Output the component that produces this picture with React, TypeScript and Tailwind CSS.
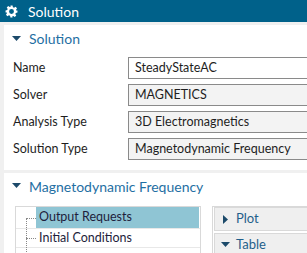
const font = "font-['Lato','Noto_Sans',sans-serif]";

const Gear = () => (
  <svg width="13" height="13" viewBox="0 0 24 24" className="shrink-0">
    <path
      fill="#ffffff"
      fillRule="evenodd"
      d="M10 1h4l.6 3.1a8.5 8.5 0 0 1 2.2.9l2.6-1.8 2.8 2.8-1.8 2.6a8.5 8.5 0 0 1 .9 2.2L23 10v4l-3.1.6a8.5 8.5 0 0 1-.9 2.2l1.8 2.6-2.8 2.8-2.6-1.8a8.5 8.5 0 0 1-2.2.9L14 23h-4l-.6-3.1a8.5 8.5 0 0 1-2.2-.9l-2.6 1.8-2.8-2.8 1.8-2.6a8.5 8.5 0 0 1-.9-2.2L1 14v-4l3.1-.6a8.5 8.5 0 0 1 .9-2.2L3.2 4.6 6 1.8l2.6 1.8a8.5 8.5 0 0 1 2.2-.9zM12 7.5a4.5 4.5 0 1 0 0 9 4.5 4.5 0 0 0 0-9z"
    />
  </svg>
);

const Down = () => (
  <svg width="9" height="6" viewBox="0 0 9 6" className="shrink-0">
    <path d="M0 0h9L4.5 5z" fill="#1c4a6a" />
  </svg>
);

const Right = () => (
  <svg width="5" height="9" viewBox="0 0 5 9" className="shrink-0">
    <path d="M0 0v9l5-4.5z" fill="#1c4a6a" />
  </svg>
);

const fields = [
  { label: "Name", value: "SteadyStateAC", editable: true },
  { label: "Solver", value: "MAGNETICS" },
  { label: "Analysis Type", value: "3D Electromagnetics" },
  { label: "Solution Type", value: "Magnetodynamic Frequency" },
];

export default function App() {
  return (
    <div className={`${font} h-[253px] w-[307px] overflow-hidden whitespace-nowrap bg-[#f0f0f0]`}>
      <div className="flex h-[22px] items-center gap-[10px] bg-[#00618a] pl-[5px] text-[14px] text-white">
        <Gear />
        <span>Solution</span>
      </div>

      <div className="flex flex-col gap-[3px] pl-[4px] pt-[3px]">
        <div className="bg-white pb-[10px]">
          <div className="mb-[5px] flex h-[27px] items-center gap-[8px] pl-[8px] text-[14px] text-[#1f6fa3]">
            <Down />
            <span>Solution</span>
          </div>
          <div className="flex flex-col gap-[5px]">
            {fields.map((f) => (
              <div key={f.label} className="flex h-[22px] items-center">
                <div className="w-[124px] pl-[9px] text-[12.5px] text-[#1e1e1e]">{f.label}</div>
                <div
                  className={`flex h-[22px] flex-1 items-center border border-r-0 border-[#8a8a8a] pl-[6px] text-[12.5px] text-[#1e1e1e] ${
                    f.editable ? "bg-white" : "bg-[#f3f3f3]"
                  }`}
                >
                  {f.value}
                </div>
              </div>
            ))}
          </div>
        </div>

        <div className="h-[100px] bg-white">
          <div className="mb-[7px] flex h-[26px] items-center gap-[8px] pl-[8px] text-[14px] text-[#1f6fa3]">
            <Down />
            <span>Magnetodynamic Frequency</span>
          </div>
          <div className="flex gap-[11px] pl-[11px]">
            <div className="relative h-[60px] w-[186px] border border-b-0 border-[#d9d9d9]">
              <div className="absolute left-[10px] top-[11px] h-[60px] border-l border-dotted border-[#888]" />
              <div className="flex h-[22px] border-b border-[#e8e8e8]">
                <div className="relative w-[20px]">
                  <div className="absolute left-[10px] top-[11px] w-[10px] border-t border-dotted border-[#888]" />
                </div>
                <div className="mr-[1px] flex flex-1 items-center bg-[#8fc5d4] pl-[3px] text-[12.5px] text-[#1e1e3c]">
                  Output Requests
                </div>
              </div>
              <div className="flex h-[19px] border-b border-[#e8e8e8]">
                <div className="relative w-[20px]">
                  <div className="absolute left-[10px] top-[9px] w-[10px] border-t border-dotted border-[#888]" />
                </div>
                <div className="flex flex-1 items-center pl-[3px] text-[12.5px] text-[#1e1e3c]">
                  Initial Conditions
                </div>
              </div>
            </div>

            <div className="flex h-[60px] flex-1 flex-col gap-[2px] border-l border-t border-[#d9d9d9] pl-[1px]">
              <div className="flex h-[24px] items-center gap-[8px] border border-r-0 border-[#d9d9d9] bg-[#efefef] pl-[8px] text-[13px] text-[#1f5f8b]">
                <Right />
                <span>Plot</span>
              </div>
              <div className="flex h-[24px] items-center gap-[6px] border border-r-0 border-[#d9d9d9] bg-[#efefef] pl-[6px] text-[13px] text-[#1f5f8b]">
                <Down />
                <span>Table</span>
              </div>
            </div>
          </div>
        </div>
      </div>
    </div>
  );
}
